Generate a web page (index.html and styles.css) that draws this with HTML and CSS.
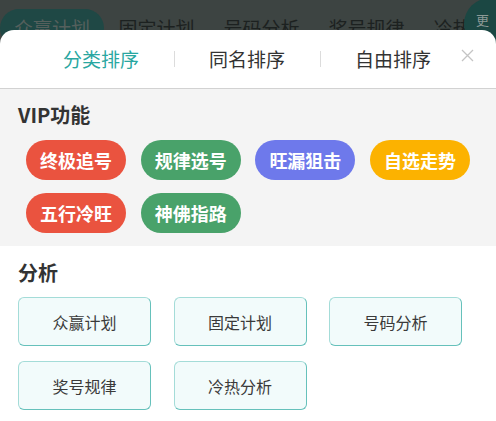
FILE: index.html
```html
<!DOCTYPE html>
<html lang="zh">
<head>
<meta charset="utf-8">
<link rel="stylesheet" href="styles.css">
</head>
<body>
<div class="page">
  <div class="topbar">
    <div class="toptab active">众赢计划</div>
    <div class="toptab">固定计划</div>
    <div class="toptab">号码分析</div>
    <div class="toptab">奖号规律</div>
    <div class="toptab">冷热分析</div>
  </div>
  <div class="more">更</div>

  <div class="sheet">
    <div class="tabs">
      <div class="tab current">分类排序</div>
      <div class="tab">同名排序</div>
      <div class="tab">自由排序</div>
      <button class="close" aria-label="关闭">
        <svg width="13" height="13" viewBox="0 0 13 13"><path d="M1 1L12 12M12 1L1 12" stroke="#c4c4c4" stroke-width="1.3" fill="none"/></svg>
      </button>
    </div>

    <section class="vip">
      <h2 class="title">VIP功能</h2>
      <div class="pills">
        <span class="pill red">终极追号</span>
        <span class="pill green">规律选号</span>
        <span class="pill purple">旺漏狙击</span>
        <span class="pill yellow">自选走势</span>
        <span class="pill red">五行冷旺</span>
        <span class="pill green">神佛指路</span>
      </div>
    </section>

    <section class="analysis">
      <h2 class="title">分析</h2>
      <div class="grid">
        <div class="cell">众赢计划</div>
        <div class="cell">固定计划</div>
        <div class="cell">号码分析</div>
        <div class="cell">奖号规律</div>
        <div class="cell">冷热分析</div>
      </div>
    </section>
  </div>
</div>
</body>
</html>
```

FILE: styles.css
```css
* { box-sizing: border-box; }
html, body {
  margin: 0;
  padding: 0;
}
body {
  font-family: "Noto Sans CJK SC", "Noto Sans", sans-serif;
  background: #3d4442;
}
.page {
  position: relative;
  width: 496px;
  height: 421px;
  overflow: hidden;
}
.topbar {
  display: flex;
  padding-top: 9px;
  white-space: nowrap;
}
.toptab {
  flex: 0 0 105px;
  height: 38px;
  line-height: 38px;
  text-align: center;
  font-size: 19px;
  color: #1c2120;
}
.toptab.active {
  flex-basis: 104px;
  background: #1f4845;
  color: #55605d;
  border-radius: 19px;
}
.more {
  position: absolute;
  top: -2px;
  right: -20px;
  width: 52px;
  height: 52px;
  border-radius: 50%;
  background: #1b4743;
  color: #8c9996;
  font-size: 13px;
  padding: 12px 0 0 12px;
}
.sheet {
  position: absolute;
  top: 30px;
  left: 0;
  right: 0;
  bottom: 0;
  background: #fff;
  border-radius: 14px 14px 0 0;
  overflow: hidden;
}
.tabs {
  position: relative;
  display: flex;
  height: 59px;
  padding-left: 28px;
  border-bottom: 1px solid #d2d2d2;
  align-items: center;
}
.tab {
  width: 146px;
  text-align: center;
  font-size: 19px;
  color: #333;
  line-height: 20px;
  position: relative;
}
.tab + .tab::before {
  content: "";
  position: absolute;
  left: 0;
  top: 2px;
  width: 1px;
  height: 16px;
  background: #dcdcdc;
}
.tab.current { color: #2aa7a1; }
.close {
  position: absolute;
  right: 22px;
  top: 19px;
  border: 0;
  background: none;
  padding: 0;
  width: 13px;
  height: 13px;
  display: block;
}
.close svg { display: block; }
.title {
  margin: 0;
  font-size: 20px;
  line-height: 28px;
  font-weight: 700;
  color: #333;
}
.vip {
  background: #f4f4f4;
  padding: 12px 18px 13px 18px;
}
.pills {
  margin-top: 11px;
  padding-left: 8px;
  display: grid;
  grid-template-columns: repeat(4, 100px);
  column-gap: 14.7px;
  row-gap: 13px;
}
.pill {
  height: 40px;
  border-radius: 20px;
  color: #fff;
  font-size: 18px;
  font-weight: 700;
  display: flex;
  align-items: center;
  justify-content: center;
}
.red { background: #ea533f; }
.green { background: #49a26a; }
.purple { background: #6e79eb; }
.yellow { background: #fcb200; }
.analysis {
  padding: 13px 18px 0 18px;
}
.grid {
  margin-top: 10px;
  display: grid;
  grid-template-columns: repeat(3, 133px);
  column-gap: 22.5px;
  row-gap: 15px;
}
.cell {
  height: 49px;
  border: 1px solid #a4dcd8;
  border-right-color: #66c1bb;
  border-bottom-color: #66c1bb;
  border-radius: 6px;
  background: #f2fbfb;
  display: flex;
  align-items: center;
  justify-content: center;
  font-size: 16px;
  color: #3a3a3a;
}
```
